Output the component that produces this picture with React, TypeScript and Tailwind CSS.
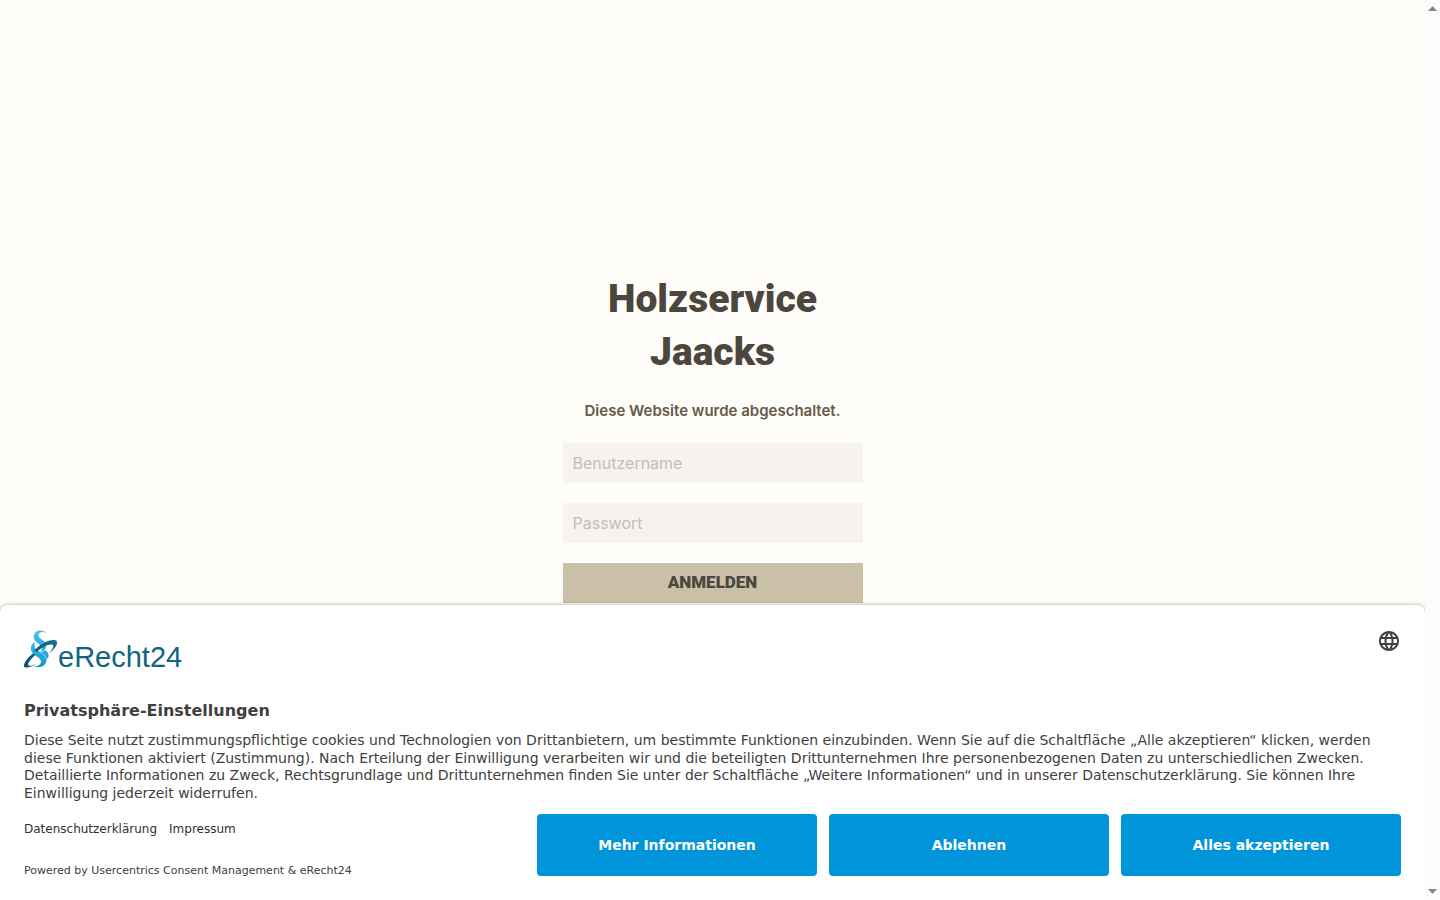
import { MdLanguage } from 'react-icons/md'

const ACTIONS = ['Mehr Informationen', 'Ablehnen', 'Alles akzeptieren']

function Logo() {
  return (
    <div className="flex h-10 items-end" role="img" aria-label="eRecht24">
      <svg width="34" height="39" viewBox="0 0 34 39" fill="none">
        <defs>
          <linearGradient id="sign" x1="17" y1="0" x2="17" y2="38" gradientUnits="userSpaceOnUse">
            <stop stopColor="#45c3ee" />
            <stop offset="1" stopColor="#1696cf" />
          </linearGradient>
          <linearGradient id="ring" x1="0" y1="37" x2="33" y2="10" gradientUnits="userSpaceOnUse">
            <stop stopColor="#0b4f72" />
            <stop offset="1" stopColor="#14728c" />
          </linearGradient>
        </defs>
        <g fill="url(#sign)">
          <path d="M22 3C19 -0.800 10 -0.500 9.800 7C9.800 13 17.500 14 18 18C18 20 17 21 15.500 22C19.500 21.500 22.500 19 22.300 15C22 10 14.500 9 14.300 5.500C14.300 2.500 18.500 1 22 3Z" />
          <path d="M11 12C6.500 14 5.500 20 9 23.500C12 26.500 17 28 17 31.500C17 35 13 37 9.500 35.500C13.500 39 22.500 37 22.500 30C22.500 24 12.500 21.500 11 17.500C10.300 15.500 10.300 13.500 11 12Z" />
          <path d="M20.500 20C23.500 21.500 25.300 24 24.500 26.500C24 28 23.300 28.800 22.500 29.200C22.300 26 19.500 23.800 16.500 22.500C18.500 22 19.800 21 20.500 20Z" />
        </g>
        <g fill="url(#ring)">
          <path d="M10.500 20.500C16 13.500 29 7.500 32.600 11C34.500 14.500 29.500 20 25 23.500C28.500 19 30.500 15.500 28.500 14.700C25 13.700 17 17.500 12.500 22.300Z" />
          <path d="M9.300 23.300C3.500 27.500-1.500 34.500 0.400 37C2.300 38.500 8 37 12.500 33.500C8 36 4.800 36.500 4.300 35C3.700 32.500 7.500 28.500 11.300 25Z" />
        </g>
      </svg>
      <span className="font-['Liberation_Sans',sans-serif] text-[29px] leading-6 text-[#12647f]">
        eRecht24
      </span>
    </div>
  )
}

function LoginForm() {
  return (
    <form className="mb-6 flex w-[300px] flex-col gap-5" onSubmit={(e) => e.preventDefault()}>
      <h1 className="px-6 text-center font-['Roboto',sans-serif] text-[39px] leading-[53px] font-black text-[#4c473d]">
        Holzservice Jaacks
      </h1>
      <p className="text-center text-[15px] leading-6 font-semibold text-[#665a48]">
        Diese Website wurde abgeschaltet.
      </p>
      <input
        type="text"
        aria-label="Benutzername"
        placeholder="Benutzername"
        className="h-10 w-full bg-[#f6f3ef] px-2.5 text-base placeholder:text-[#c3beb7]"
      />
      <input
        type="password"
        aria-label="Passwort"
        placeholder="Passwort"
        className="h-10 w-full bg-[#f6f3ef] px-2.5 text-base placeholder:text-[#c3beb7]"
      />
      <button
        type="submit"
        className="h-10 w-full bg-[#cac0a7] font-['Roboto',sans-serif] text-[17px] font-black text-[#4c473d]"
      >
        ANMELDEN
      </button>
    </form>
  )
}

function ConsentBanner() {
  return (
    <section
      aria-labelledby="consent-title"
      className="absolute inset-x-0 bottom-0 rounded-t-lg bg-white p-6 font-['DejaVu_Sans',sans-serif] text-[#404040] shadow-[0_0_4px_rgba(0,0,0,0.35)]"
    >
      <div className="flex items-start justify-between">
        <Logo />
        <button type="button" aria-label="Sprache wählen">
          <MdLanguage size={24} />
        </button>
      </div>

      <h2 id="consent-title" className="mt-8 text-base leading-5 font-bold">
        Privatsphäre-Einstellungen
      </h2>
      <p className="mt-[11px] text-sm leading-tight">
        Diese Seite nutzt zustimmungspflichtige cookies und Technologien von Drittanbietern, um bestimmte
        Funktionen einzubinden. Wenn Sie auf die Schaltfläche „Alle akzeptieren“ klicken, werden diese
        Funktionen aktiviert (Zustimmung). Nach Erteilung der Einwilligung verarbeiten wir und die
        beteiligten Drittunternehmen Ihre personenbezogenen Daten zu unterschiedlichen Zwecken. Detaillierte
        Informationen zu Zweck, Rechtsgrundlage und Drittunternehmen finden Sie unter der Schaltfläche
        „Weitere Informationen“ und in unserer Datenschutzerklärung. Sie können Ihre Einwilligung jederzeit
        widerrufen.
      </p>

      <div className="mt-3 flex justify-between">
        <div className="flex flex-col justify-between pt-[7px]">
          <nav className="flex gap-3 text-xs leading-4 text-[#303030]">
            <a href="#datenschutz">Datenschutzerklärung</a>
            <a href="#impressum">Impressum</a>
          </nav>
          <p className="text-[11px] leading-[10px]">
            Powered by <a href="#usercentrics">Usercentrics Consent Management</a> &amp; eRecht24
          </p>
        </div>
        <div className="flex gap-3">
          {ACTIONS.map((label) => (
            <button
              key={label}
              type="button"
              className="h-[62px] w-[280px] rounded bg-[#0095db] text-sm font-bold text-white"
            >
              {label}
            </button>
          ))}
        </div>
      </div>
    </section>
  )
}

function ScrollTrack() {
  return (
    <div className="flex w-[15px] shrink-0 flex-col items-center justify-between bg-[#fcfcfc] py-1.5" aria-hidden="true">
      <svg width="9" height="5" viewBox="0 0 9 5" fill="#858585">
        <path d="M4.500 0L9 5H0Z" />
      </svg>
      <svg width="9" height="5" viewBox="0 0 9 5" fill="#858585">
        <path d="M0 0H9L4.500 5Z" />
      </svg>
    </div>
  )
}

export default function App() {
  return (
    <div className="flex h-screen bg-[#fffdfa] font-['Inter',sans-serif]">
      <main className="relative flex flex-1 flex-col items-center justify-center overflow-hidden">
        <LoginForm />
        <ConsentBanner />
      </main>
      <ScrollTrack />
    </div>
  )
}
